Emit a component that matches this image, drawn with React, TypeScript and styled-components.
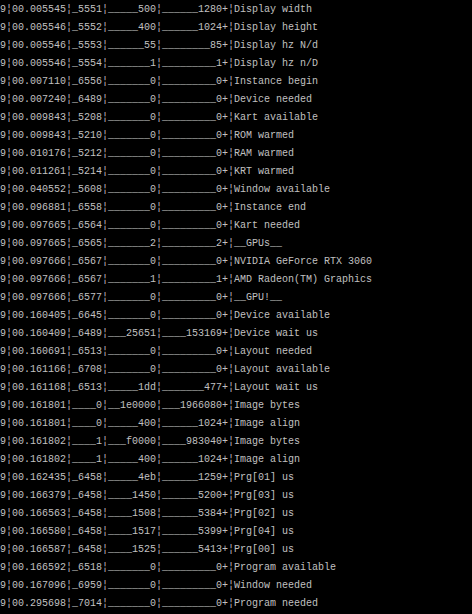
import React from "react";
import styled, { createGlobalStyle } from "styled-components";

const Global = createGlobalStyle`
  html, body { margin: 0; padding: 0; background: #000; }
  #root { background: #000; }
`;

const Console = styled.div`
  background: #000;
  color: #c0c0c0;
  font-family: "Liberation Mono", "DejaVu Sans Mono", monospace;
  font-size: 10px;
  width: 472px;
  height: 614px;
  overflow: hidden;
  padding-top: 1px;
  box-sizing: border-box;
`;

const Line = styled.div`
  white-space: pre;
  height: 18px;
  line-height: 18px;
`;

type Row = [string, string, string, string, string];

const rows: Row[] = [
  ["00.005545", "5551", "500", "1280", "Display width"],
  ["00.005546", "5552", "400", "1024", "Display height"],
  ["00.005546", "5553", "55", "85", "Display hz N/d"],
  ["00.005546", "5554", "1", "1", "Display hz n/D"],
  ["00.007110", "6556", "0", "0", "Instance begin"],
  ["00.007240", "6489", "0", "0", "Device needed"],
  ["00.009843", "5208", "0", "0", "Kart available"],
  ["00.009843", "5210", "0", "0", "ROM warmed"],
  ["00.010176", "5212", "0", "0", "RAM warmed"],
  ["00.011261", "5214", "0", "0", "KRT warmed"],
  ["00.040552", "5608", "0", "0", "Window available"],
  ["00.096881", "6558", "0", "0", "Instance end"],
  ["00.097665", "6564", "0", "0", "Kart needed"],
  ["00.097665", "6565", "2", "2", "__GPUs__"],
  ["00.097666", "6567", "0", "0", "NVIDIA GeForce RTX 3060"],
  ["00.097666", "6567", "1", "1", "AMD Radeon(TM) Graphics"],
  ["00.097666", "6577", "0", "0", "__GPU!__"],
  ["00.160405", "6645", "0", "0", "Device available"],
  ["00.160409", "6489", "25651", "153169", "Device wait us"],
  ["00.160691", "6513", "0", "0", "Layout needed"],
  ["00.161166", "6708", "0", "0", "Layout available"],
  ["00.161168", "6513", "1dd", "477", "Layout wait us"],
  ["00.161801", "0", "1e0000", "1966080", "Image bytes"],
  ["00.161801", "0", "400", "1024", "Image align"],
  ["00.161802", "1", "f0000", "983040", "Image bytes"],
  ["00.161802", "1", "400", "1024", "Image align"],
  ["00.162435", "6458", "4eb", "1259", "Prg[01] us"],
  ["00.166379", "6458", "1450", "5200", "Prg[03] us"],
  ["00.166563", "6458", "1508", "5384", "Prg[02] us"],
  ["00.166580", "6458", "1517", "5399", "Prg[04] us"],
  ["00.166587", "6458", "1525", "5413", "Prg[00] us"],
  ["00.166592", "6518", "0", "0", "Program available"],
  ["00.167096", "6959", "0", "0", "Window needed"],
  ["00.295698", "7014", "0", "0", "Program needed"],
];

const pad = (s: string, n: number) => s.padStart(n, "_");

const format = ([t, a, b, c, label]: Row) =>
  `9¦${t}¦${pad(a, 5)}¦${pad(b, 8)}¦${pad(c + "+", 11)}¦${label}`;

export default function App() {
  return (
    <>
      <Global />
      <Console>
        {rows.map((r, i) => (
          <Line key={i}>{format(r)}</Line>
        ))}
      </Console>
    </>
  );
}
